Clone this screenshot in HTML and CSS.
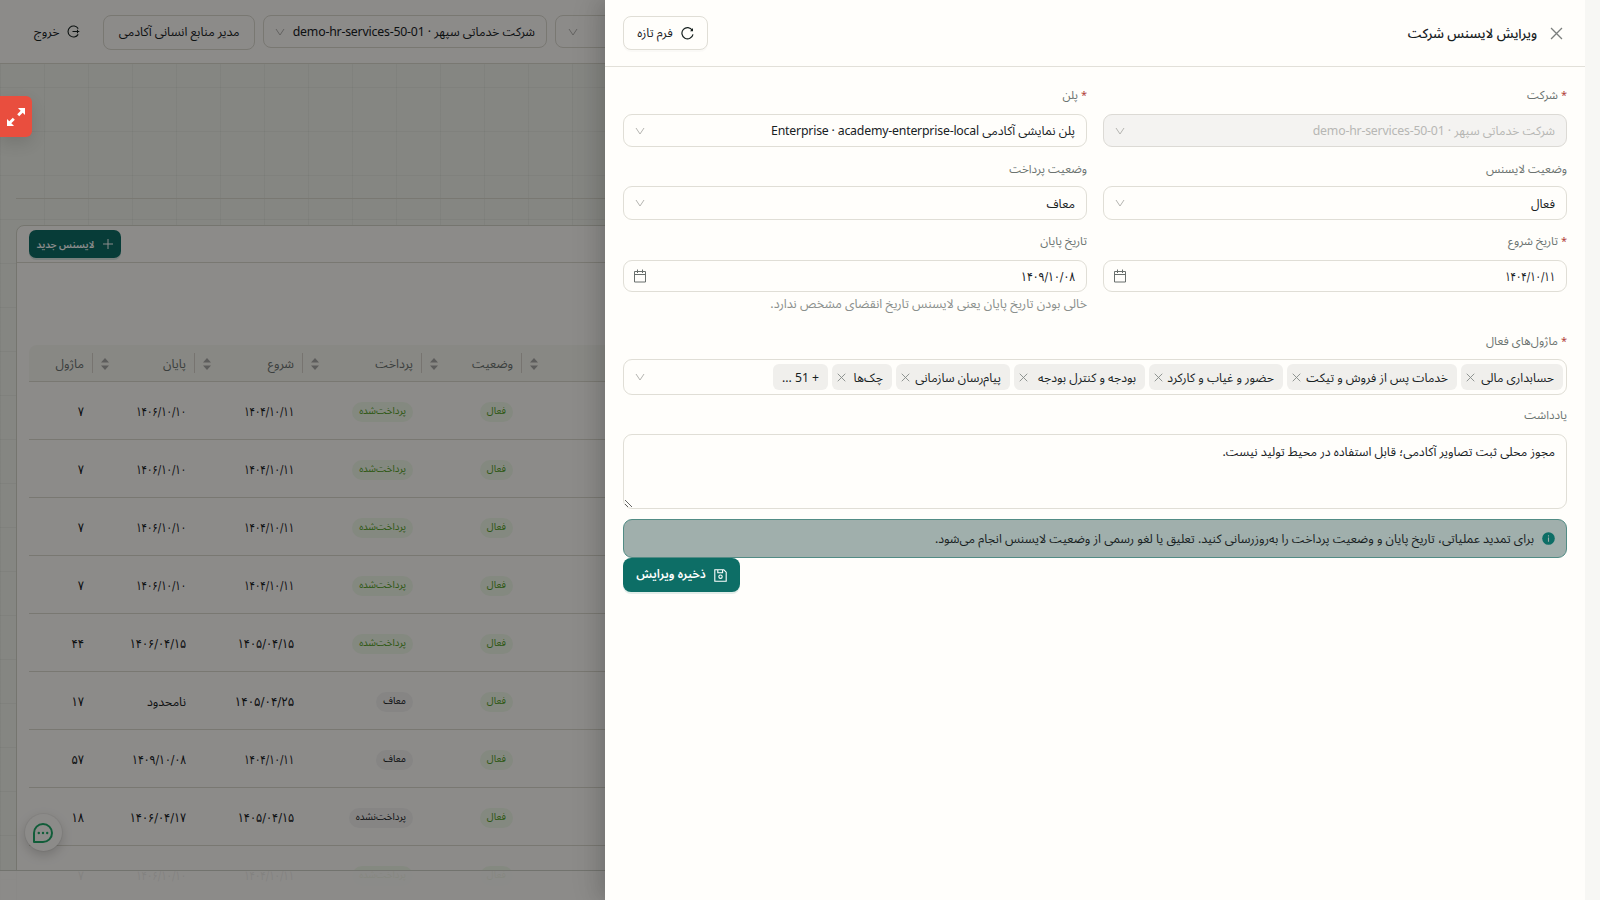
FILE: index.html
```html
<!DOCTYPE html>
<html lang="fa" dir="rtl">
<head>
<meta charset="utf-8">
<title>ویرایش لایسنس شرکت</title>
<link rel="stylesheet" href="styles.css">
</head>
<body>
<svg class="defs" width="0" height="0">
  <symbol id="chev" viewBox="0 0 10 10"><path d="M1 2l4 6 4-6" fill="none" stroke="currentColor"/></symbol>
  <symbol id="x" viewBox="0 0 10 10"><path d="M.8.8l8.4 8.4M9.2.8L.8 9.2" fill="none" stroke="currentColor"/></symbol>
  <symbol id="cal" viewBox="0 0 14 14"><path d="M1.500 2.500h11v10.500h-11zM1.500 5.500h11M4.500.5v3.500M9.500.5v3.500" fill="none" stroke="currentColor"/></symbol>
  <symbol id="sort" viewBox="0 0 8 12"><path d="M4 0l4 4.6H0zM4 12L0 7.4h8z" fill="currentColor"/></symbol>
</svg>

<div class="app">
  <header class="topbar">
    <div class="box pick-empty"><svg class="chev"><use href="#chev"/></svg></div>
    <div class="box pick"><span class="txt">شرکت خدماتی سپهر · <span class="lat">demo-hr-services-50-01</span></span><svg class="chev"><use href="#chev"/></svg></div>
    <div class="box role">مدیر منابع انسانی آکادمی</div>
    <div class="exit"><svg width="13" height="13" viewBox="0 0 13 13" fill="none" stroke="currentColor" stroke-width="1.1"><path d="M11.200 3.600a5.500 5.500 0 1 0 0 5.800M5.500 6.500h6.800M10.500 4.700v3.600"/></svg>خروج</div>
  </header>
  <main class="page">
    <div class="hero"></div>
    <section class="card">
      <div class="toolbar"><button class="new"><svg width="10" height="10" viewBox="0 0 10 10"><path d="M5 0v10M0 5h10" stroke="currentColor"/></svg>لایسنس جدید</button></div>
      <div class="table">
        <div class="row head">
          <div class="fill"><svg class="sort"><use href="#sort"/></svg></div>
          <div class="c1">وضعیت<svg class="sort"><use href="#sort"/></svg></div>
          <div class="c2">پرداخت<svg class="sort"><use href="#sort"/></svg></div>
          <div class="c3">شروع<svg class="sort"><use href="#sort"/></svg></div>
          <div class="c4">پایان<svg class="sort"><use href="#sort"/></svg></div>
          <div class="c5">ماژول</div>
        </div>
        <div class="row"><div class="fill"></div><div class="c1"><span class="pill ok">فعال</span></div><div class="c2"><span class="pill ok">پرداخت‌شده</span></div><div class="c3"><span class="num tight">۱۴۰۴/۱۰/۱۱</span></div><div class="c4"><span class="num tight">۱۴۰۶/۱۰/۱۰</span></div><div class="c5 num">۷</div></div>
        <div class="row"><div class="fill"></div><div class="c1"><span class="pill ok">فعال</span></div><div class="c2"><span class="pill ok">پرداخت‌شده</span></div><div class="c3"><span class="num tight">۱۴۰۴/۱۰/۱۱</span></div><div class="c4"><span class="num tight">۱۴۰۶/۱۰/۱۰</span></div><div class="c5 num">۷</div></div>
        <div class="row"><div class="fill"></div><div class="c1"><span class="pill ok">فعال</span></div><div class="c2"><span class="pill ok">پرداخت‌شده</span></div><div class="c3"><span class="num tight">۱۴۰۴/۱۰/۱۱</span></div><div class="c4"><span class="num tight">۱۴۰۶/۱۰/۱۰</span></div><div class="c5 num">۷</div></div>
        <div class="row"><div class="fill"></div><div class="c1"><span class="pill ok">فعال</span></div><div class="c2"><span class="pill ok">پرداخت‌شده</span></div><div class="c3"><span class="num tight">۱۴۰۴/۱۰/۱۱</span></div><div class="c4"><span class="num tight">۱۴۰۶/۱۰/۱۰</span></div><div class="c5 num">۷</div></div>
        <div class="row"><div class="fill"></div><div class="c1"><span class="pill ok">فعال</span></div><div class="c2"><span class="pill ok">پرداخت‌شده</span></div><div class="c3"><span class="num near">۱۴۰۵/۰۴/۱۵</span></div><div class="c4"><span class="num near">۱۴۰۶/۰۴/۱۵</span></div><div class="c5 num">۴۴</div></div>
        <div class="row"><div class="fill"></div><div class="c1"><span class="pill ok">فعال</span></div><div class="c2"><span class="pill">معاف</span></div><div class="c3"><span class="num wide">۱۴۰۵/۰۴/۲۵</span></div><div class="c4">نامحدود</div><div class="c5 num">۱۷</div></div>
        <div class="row"><div class="fill"></div><div class="c1"><span class="pill ok">فعال</span></div><div class="c2"><span class="pill">معاف</span></div><div class="c3"><span class="num tight">۱۴۰۴/۱۰/۱۱</span></div><div class="c4"><span class="num mid">۱۴۰۹/۱۰/۰۸</span></div><div class="c5 num">۵۷</div></div>
        <div class="row"><div class="fill"></div><div class="c1"><span class="pill ok">فعال</span></div><div class="c2"><span class="pill">پرداخت‌نشده</span></div><div class="c3"><span class="num near">۱۴۰۵/۰۴/۱۵</span></div><div class="c4"><span class="num near">۱۴۰۶/۰۴/۱۷</span></div><div class="c5 num">۱۸</div></div>
        <div class="row"><div class="fill"></div><div class="c1"><span class="pill ok">فعال</span></div><div class="c2"><span class="pill ok">پرداخت‌شده</span></div><div class="c3"><span class="num tight">۱۴۰۴/۱۰/۱۱</span></div><div class="c4"><span class="num tight">۱۴۰۶/۱۰/۱۰</span></div><div class="c5 num">۷</div></div>
      </div>
    </section>
  </main>
  <footer class="foot"></footer>
  <div class="chat"><svg width="22" height="22" viewBox="0 0 22 22"><path d="M2 20V11a9 9 0 1 1 9 9z" fill="none" stroke="#1fa968" stroke-width="2" stroke-linejoin="round"/><g fill="#1fa968"><circle cx="6.800" cy="11" r="1.200"/><circle cx="11" cy="11" r="1.200"/><circle cx="15.200" cy="11" r="1.200"/></g></svg></div>
</div>
<div class="mask"></div>

<div class="expand"><svg width="20" height="20" viewBox="0 0 20 20"><path d="M19 1v7l-2.300-2.200-3.500 3.500-2-2 3.500-3.500L12.300 1.500V1zM1 19v-7l2.300 2.200 3.500-3.500 2 2-3.500 3.500L7.700 18.500V19z" fill="#fff"/></svg></div>

<aside class="drawer">
  <header class="dhead">
    <svg class="close"><use href="#x"/></svg>
    <h2>ویرایش لایسنس شرکت</h2>
    <button class="fresh"><svg width="13" height="13" viewBox="0 0 13 13" fill="none" stroke="currentColor" stroke-width="1.2"><path d="M11.300 3.300A5.600 5.600 0 1 0 12 7.400"/><path d="M12 1v3.200H9z" fill="currentColor" stroke="none"/></svg>فرم تازه</button>
  </header>
  <div class="form">
    <div class="grid">
      <div class="field"><label><i>*</i>شرکت</label><div class="ctl h33 off"><span>شرکت خدماتی سپهر · <span class="lat">demo-hr-services-50-01</span></span><svg class="chev"><use href="#chev"/></svg></div></div>
      <div class="field"><label><i>*</i>پلن</label><div class="ctl h33"><span>پلن نمایشی آکادمی <span class="lat">Enterprise · academy-enterprise-local</span></span><svg class="chev"><use href="#chev"/></svg></div></div>
      <div class="field"><label>وضعیت لایسنس</label><div class="ctl h34"><span>فعال</span><svg class="chev"><use href="#chev"/></svg></div></div>
      <div class="field"><label>وضعیت پرداخت</label><div class="ctl h34"><span>معاف</span><svg class="chev"><use href="#chev"/></svg></div></div>
      <div class="field dates"><label><i>*</i>تاریخ شروع</label><div class="ctl h32"><span class="num tight">۱۴۰۴/۱۰/۱۱</span><svg class="cal"><use href="#cal"/></svg></div></div>
      <div class="field dates"><label>تاریخ پایان</label><div class="ctl h32"><span class="num mid">۱۴۰۹/۱۰/۰۸</span><svg class="cal"><use href="#cal"/></svg></div><div class="help">خالی بودن تاریخ پایان یعنی لایسنس تاریخ انقضای مشخص ندارد.</div></div>
    </div>
    <div class="field mods"><label><i>*</i>ماژول‌های فعال</label>
      <div class="ctl tags">
        <span class="tag w1">حسابداری مالی<svg><use href="#x"/></svg></span>
        <span class="tag w2">خدمات پس از فروش و تیکت<svg><use href="#x"/></svg></span>
        <span class="tag w3">حضور و غیاب و کارکرد<svg><use href="#x"/></svg></span>
        <span class="tag w4">بودجه و کنترل بودجه<svg><use href="#x"/></svg></span>
        <span class="tag w5">پیام‌رسان سازمانی<svg><use href="#x"/></svg></span>
        <span class="tag w6">چک‌ها<svg><use href="#x"/></svg></span>
        <span class="tag w7">+ 51 ...</span>
        <svg class="chev"><use href="#chev"/></svg>
      </div>
    </div>
    <div class="field note"><label>یادداشت</label><textarea>مجوز محلی ثبت تصاویر آکادمی؛ قابل استفاده در محیط تولید نیست.</textarea></div>
    <div class="alert"><svg width="13" height="13" viewBox="0 0 13 13"><circle cx="6.500" cy="6.500" r="6.300" fill="#0d6e66"/><path d="M6.500 5.500v4.200M6.500 3.200v1.200" stroke="#a0afac" stroke-width="1.100"/></svg><span>برای تمدید عملیاتی، تاریخ پایان و وضعیت پرداخت را به‌روزرسانی کنید. تعلیق یا لغو رسمی از وضعیت لایسنس انجام می‌شود.</span></div>
    <button class="save"><svg width="13" height="13" viewBox="0 0 13 13" fill="none" stroke="currentColor" stroke-width="1.100"><path d="M.8.8h9l2.400 2.400v9H.8zM3.800 1v2.800h4.800V1"/><circle cx="6.500" cy="7.700" r="1.700"/></svg>ذخیره ویرایش</button>
  </div>
</aside>
<div class="gutter"></div>
</body>
</html>
```
FILE: styles.css
```css
* { box-sizing: border-box; }
body {
  margin: 0; width: 1600px; height: 900px; overflow: hidden; position: relative;
  font-family: "Noto Sans Arabic", "Noto Sans", sans-serif;
  font-size: 12.3px; line-height: 20px; color: #17211f; white-space: nowrap;
}
button { font: inherit; margin: 0; }
.defs { position: absolute; }
.lat { font-family: "Noto Sans", sans-serif; letter-spacing: -.2px; }
.num { font-family: "DejaVu Sans Condensed", "DejaVu Sans", sans-serif; font-stretch: condensed; font-size: 13px; }
.tight, .mid, .near, .wide { display: block; transform-origin: right; }
.tight { transform: scaleX(.86); }
.mid { transform: scaleX(.93); }
.near { transform: scaleX(.97); }
.wide { transform: scaleX(1.02); }
.chev { width: 10px; height: 10px; color: #b5b5b1; flex: none; }

.app { position: relative; height: 900px; overflow: hidden; background-color: #f3f4ed;
  background-image: linear-gradient(90deg, transparent 43px, rgba(40,80,60,.05) 43px), linear-gradient(transparent 43px, rgba(40,80,60,.05) 43px);
  background-size: 44px 44px; background-position: 1px 0; }
.topbar { height: 64px; display: flex; justify-content: flex-end; align-items: flex-start; gap: 8px; padding: 15px 0 0 34px; background: #fffdfa; border-bottom: 1px solid #dcdad0; }
.box { border: 1px solid #dcdad0; border-radius: 8px; display: flex; align-items: center; justify-content: space-between; }
.pick-empty { width: 283px; height: 33px; padding: 0 12px; justify-content: flex-end; }
.pick { width: 284px; height: 33px; padding: 0 11px; }
.role { width: 152px; height: 35px; justify-content: center; padding-bottom: 2px; }
.exit { width: 61px; height: 33px; display: flex; align-items: center; gap: 8px; justify-content: flex-end; flex: none; padding-right: 14px; }
.hero { height: 135px; margin: 0 16px; border-bottom: 1px solid #dcdad0; }
.card { margin: 26px 16px 0; height: 760px; background: #fffdfa; border: 1px solid #d5d6ca; border-radius: 8px; }
.toolbar { height: 37px; border-bottom: 1px solid #dcdad0; display: flex; justify-content: flex-end; padding: 4px 12px; }
.new { width: 92px; height: 28px; border: 0; border-radius: 7px; background: #0d6e66; color: #fff; font-size: 9.700px; font-weight: 600; display: flex; align-items: center; justify-content: center; gap: 9px; box-shadow: 0 2px 0 rgba(15,118,110,.15); padding: 2px 0 0; }
.new svg { margin-top: -2px; }
.table { margin: 82px 12px 0; }
.row { height: 58px; display: flex; align-items: center; border-bottom: 1px solid #dcdad0; }
.row > div { display: flex; align-items: center; padding: 2px 8px 0; }
.head { height: 37px; background: #f8f7f0; border-radius: 8px 8px 0 0; color: #6b7370; font-size: 12.300px; }
.head > div { height: 20px; justify-content: space-between; border-left: 1px solid #d9d3cc; }
.head > .c5 { border-left: 0; }
.head > .fill { justify-content: flex-end; }
.sort { width: 8px; height: 12px; color: #a9aaa8; }
.fill { flex: 1; }
.c1 { width: 100px; } .c2 { width: 119px; } .c3 { width: 108px; } .c4 { width: 102px; } .c5 { width: 63px; }
.pill { height: 20px; line-height: 19px; border-radius: 10px; padding: 0 7px; font-size: 9.800px; background: #f4f3f1; }
.ok { background: #f1f9e9; color: #52a01e; }
.foot { position: absolute; left: 0; right: 0; bottom: 0; height: 30px; background: rgba(255,253,250,.93); border-top: 1px solid #d0d1c8; }
.chat { position: absolute; left: 25px; top: 814px; width: 37px; height: 37px; border-radius: 50%; background: #fffdfa; box-shadow: 0 4px 12px rgba(0,0,0,.18), 0 0 0 1px rgba(0,0,0,.04); display: flex; align-items: center; justify-content: center; padding-right: 1px; }
.mask { position: absolute; inset: 0; background: rgba(0,0,0,.45); }
.expand { position: absolute; left: 0; top: 96px; width: 32px; height: 41px; background: #e94e3e; border-radius: 0 6px 6px 0; display: flex; align-items: center; justify-content: center; box-shadow: 0 6px 16px rgba(0,0,0,.12); }

.drawer { position: absolute; left: 605px; top: 0; width: 980px; height: 900px; background: #fffefb; box-shadow: -6px 0 16px rgba(0,0,0,.1), -9px 0 28px rgba(0,0,0,.08); }
.gutter { position: absolute; left: 1585px; top: 0; width: 15px; height: 900px; background: #f7f7f4; }
.dhead { height: 67px; border-bottom: 1px solid #e2e0d9; display: flex; align-items: center; padding: 0 22px 0 18px; }
.close { width: 13px; height: 13px; color: #7b7f7d; }
h2 { margin: 2px 13px 0 auto; font-size: 13.200px; font-weight: 500; }
.fresh { width: 85px; height: 34px; border: 1px solid #e0ded6; border-radius: 8px; background: #fffefb; color: inherit; display: flex; align-items: center; justify-content: center; gap: 8px; padding: 0; box-shadow: 0 2px 0 rgba(0,0,0,.02); }
.form { padding: 17px 18px 0; }
.grid { display: grid; grid-template-columns: 464px 464px; gap: 0 16px; grid-template-rows: 74px 72px 100px; }
label { display: block; height: 24px; line-height: 24px; margin-bottom: 6px; color: #6b7370; font-size: 11.700px; }
label i { font-style: normal; color: #b2423a; margin-left: 3px; font-size: 11px; }
.ctl { border: 1px solid #e0ded6; border-radius: 9px; display: flex; align-items: center; justify-content: space-between; padding: 0 11px; }
.ctl > span:first-child:not(.tag) { padding-top: 1px; }
.h33 { height: 33px; } .h34 { height: 34px; margin-top: -2px; } .h32 { height: 32px; }
.off { background: #f4f3f1; border-color: #dcdad5; color: #b7b7b4; }
.cal { width: 14px; height: 14px; color: #686f6c; margin-left: -2px; }
.help { line-height: 24px; color: #8a8f8c; font-size: 12.450px; }
.mods label { margin-bottom: 5px; }
.tags { height: 36px; justify-content: flex-start; gap: 4px; padding: 0 3px 0 11px; }
.tags > .chev { margin-right: auto; }
.tag { height: 26px; border-radius: 6px; background: #f0efec; display: flex; align-items: center; justify-content: space-between; padding: 2px 9px 0 5px; font-size: 12.200px; }
.tag svg { width: 9px; height: 9px; color: #858a88; margin-top: -2px; }
.w1 { width: 102px; } .w2 { width: 170px; } .w3 { width: 134px; } .w4 { width: 131px; } .w5 { width: 114px; } .w6 { width: 60px; } .w7 { width: 55px; }
.note { margin-top: 9px; }
textarea { display: block; width: 944px; height: 75px; border: 1px solid #e0ded6; border-radius: 9px; background: #fffefb; font: inherit; color: inherit; padding: 7px 11px; resize: vertical; outline: 0; }
.alert { margin-top: 10px; height: 39px; border: 1px solid #528c85; border-radius: 9px; background: #a0afac; display: flex; align-items: center; gap: 8px; padding: 0 11px; }
.save { margin: 0 auto 0 0; width: 117px; height: 34px; border: 0; border-radius: 8px; background: #0d6e66; color: #fff; font-weight: 600; font-size: 12px; display: flex; align-items: center; justify-content: center; gap: 8px; box-shadow: 0 2px 0 rgba(15,118,110,.12); padding: 0; }
```
